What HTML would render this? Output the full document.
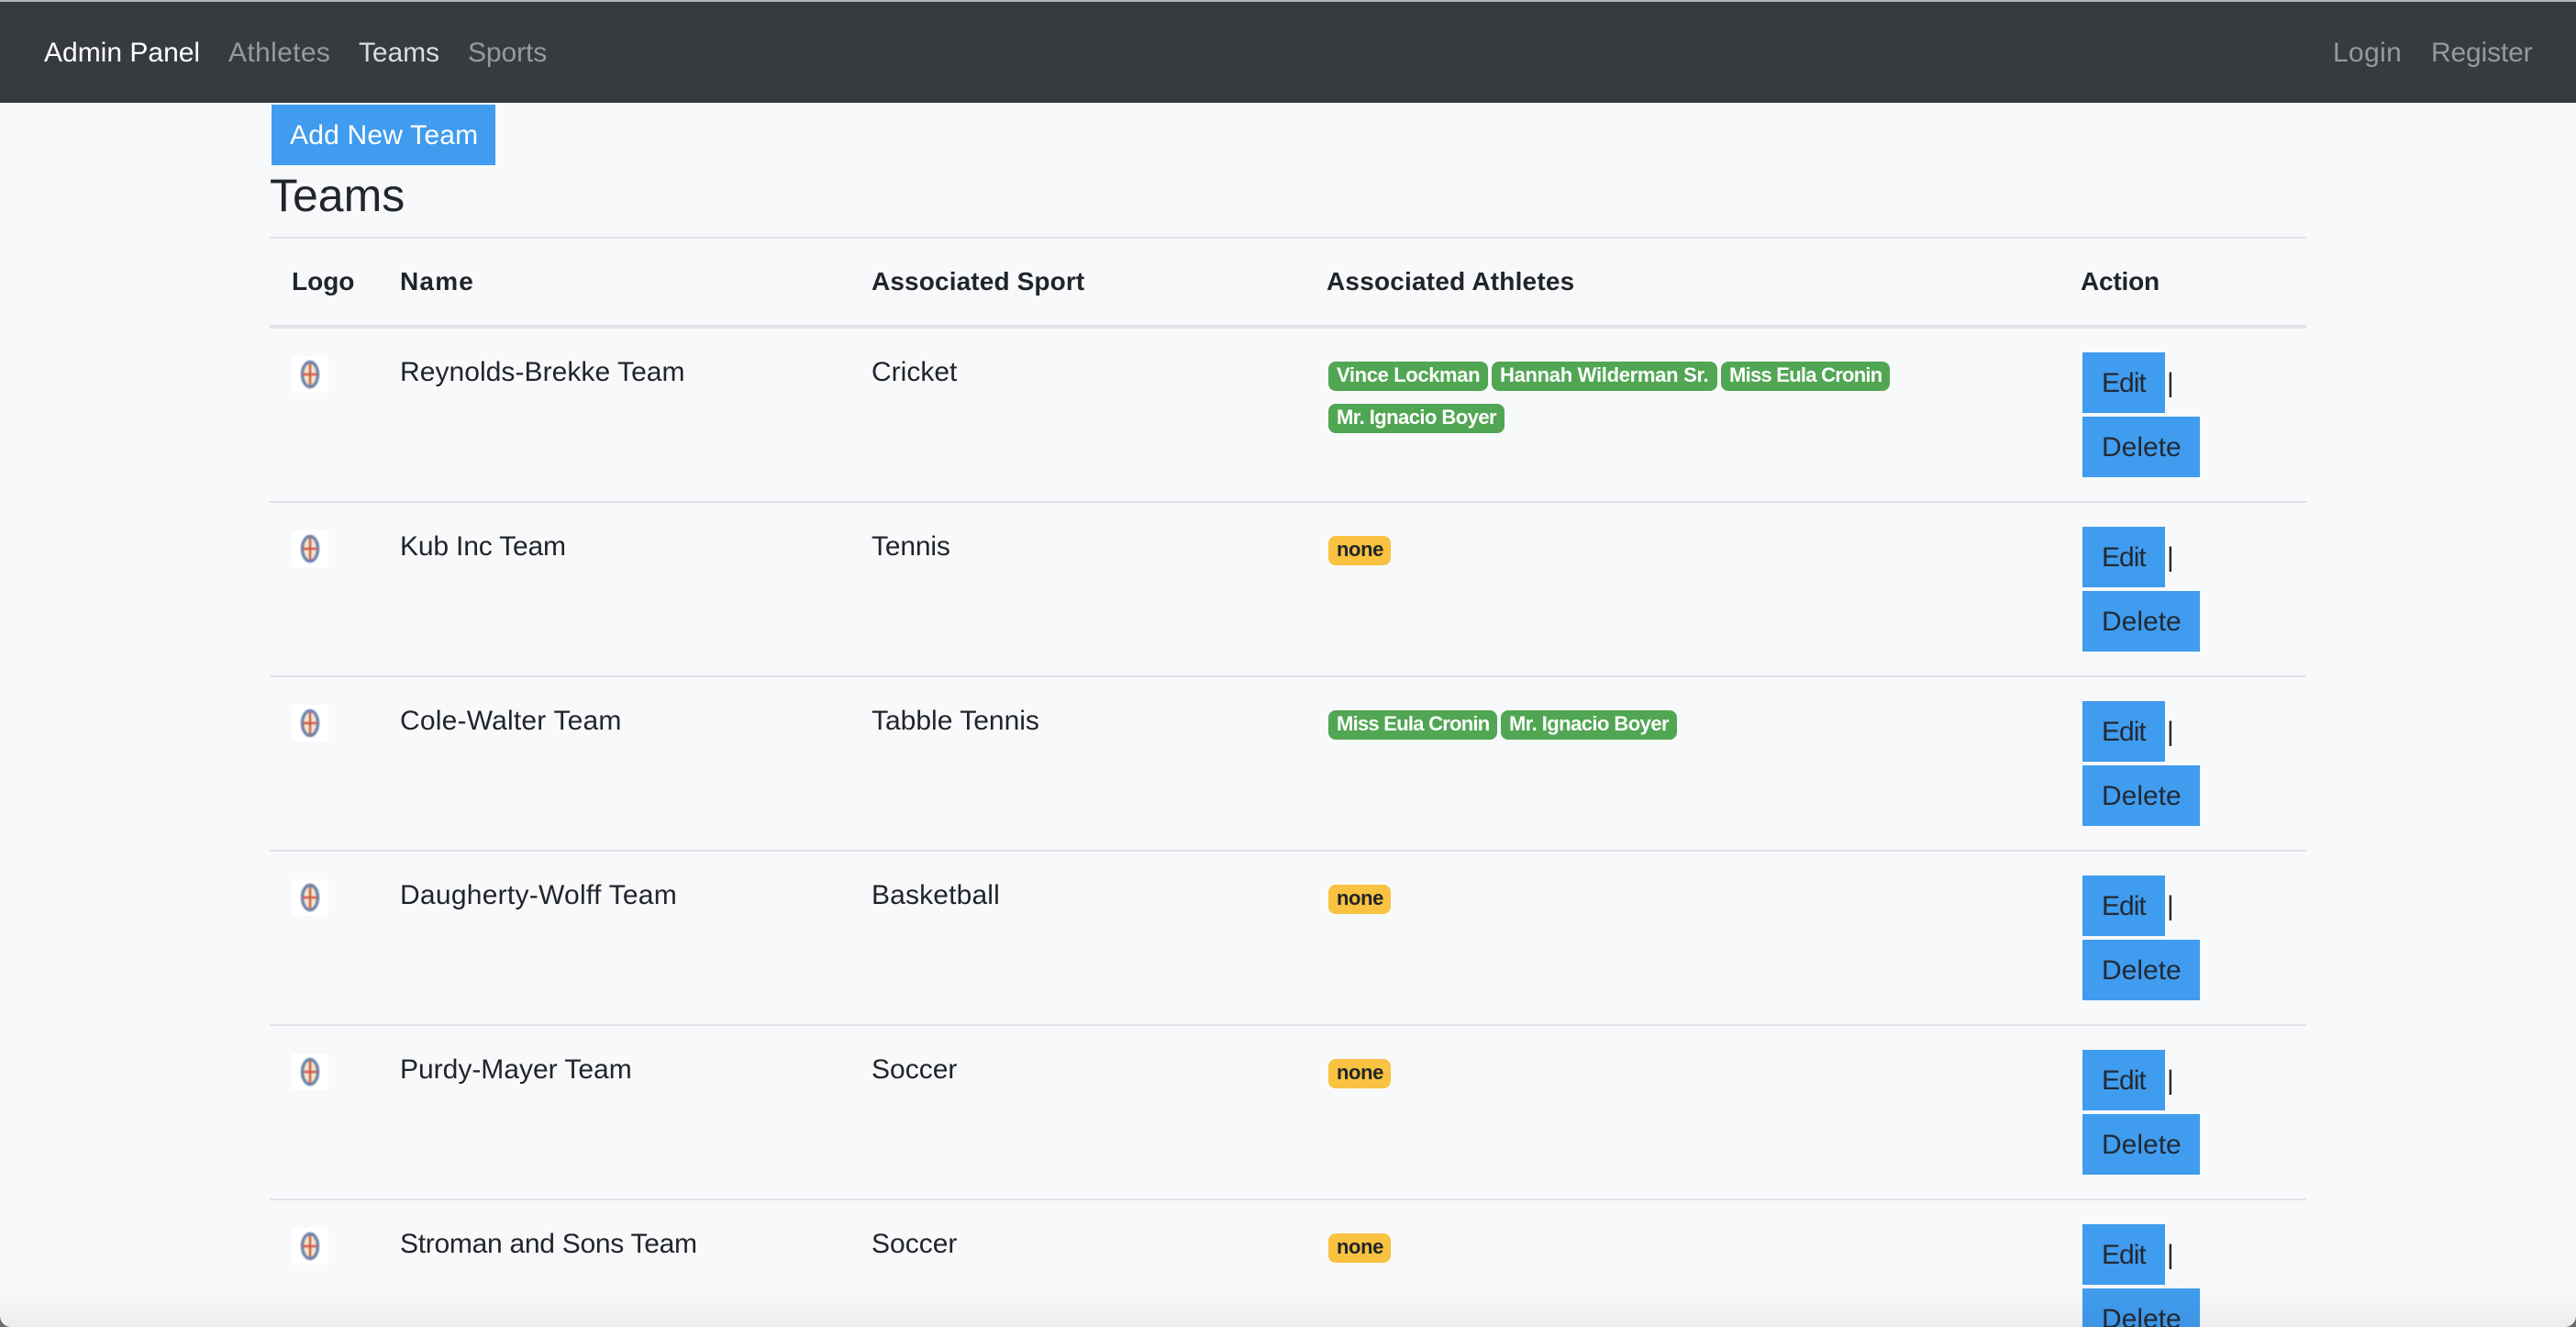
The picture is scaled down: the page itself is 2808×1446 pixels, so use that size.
<!DOCTYPE html>
<html lang="en">
<head>
<meta charset="utf-8">
<title>Teams - Admin Panel</title>
<style>
html,body{margin:0;padding:0;width:2808px;height:1446px;overflow:hidden;background:#f8f9fb}
body{position:relative;font-family:"Liberation Sans",Arial,sans-serif;font-size:30px;color:#212529}
a{text-decoration:none;color:inherit}
.t{position:absolute;white-space:nowrap;line-height:40px;top:0}
nav{position:absolute;left:0;top:0;width:2808px;height:112px;background:#373b3f;border-top:2px solid #b4b5b6;box-sizing:border-box}
nav .t{top:36px;color:#97999b}
nav .w{color:#fff}
nav .a{color:#dcdddd}
.btn{position:absolute;background:#409cee;height:66px;line-height:67px;white-space:nowrap;box-sizing:border-box;color:#212a36}
h1{position:absolute;left:294px;top:183px;margin:0;font-size:50px;font-weight:normal;line-height:60px;letter-spacing:0;color:#22262a}
.hr{position:absolute;left:294px;width:2220px;background:#e1e3e9}
.th{font-weight:bold;font-size:28px}
.row{position:absolute;left:294px;width:2220px;height:190px;box-sizing:border-box;border-bottom:2px solid #e1e3e9}
.logo{position:absolute;left:24px;top:30px;width:40px;height:40px;background:#fff;display:block}
.n{left:142px;top:28px}
.s{left:656px;top:28px}
.bd{position:absolute;height:32px;line-height:29px;border-radius:8px;font-size:22px;font-weight:bold;white-space:nowrap;box-sizing:border-box;padding-left:9px}
.g{background:#51a653;color:#fff}
.y{background:#f9c240;color:#212529}
.e{left:1976px;top:26px;width:90px;padding-left:21px}
.d{left:1976px;top:96px;width:128px;padding-left:21px}
.p{left:2068px;top:40px;color:#252535}
#shade{position:absolute;left:0;top:1386px;width:2808px;height:60px;background:linear-gradient(to bottom,rgba(0,0,0,0),rgba(0,0,0,.012) 50%,rgba(0,0,0,.05));pointer-events:none}
#corners{position:absolute;left:0;top:0;pointer-events:none}
.lg{filter:blur(.7px)}
</style>
</head>
<body>
<nav>
  <a class="t w" style="left:48px">Admin Panel</a>
  <a class="t" style="left:249px;letter-spacing:.35px">Athletes</a>
  <a class="t a" style="left:391px;letter-spacing:-.1px">Teams</a>
  <a class="t" style="left:510px;letter-spacing:-.1px">Sports</a>
  <a class="t" style="left:2543px;letter-spacing:.35px">Login</a>
  <a class="t" style="left:2650px;letter-spacing:-.15px">Register</a>
</nav>

<a class="btn" style="left:296px;top:114px;width:244px;padding-left:20px;line-height:68px;color:#fff;letter-spacing:.2px">Add New Team</a>
<h1>Teams</h1>

<div class="hr" style="top:258px;height:2px"></div>
<div class="t th" style="left:318px;top:287px">Logo</div>
<div class="t th" style="left:436px;top:287px;letter-spacing:1.2px">Name</div>
<div class="t th" style="left:950px;top:287px;letter-spacing:.13px">Associated Sport</div>
<div class="t th" style="left:1446px;top:287px;letter-spacing:.2px">Associated Athletes</div>
<div class="t th" style="left:2268px;top:287px;letter-spacing:-.2px">Action</div>
<div class="hr" style="top:354px;height:4px"></div>

<div class="row" style="top:358px">
  <svg class="logo" viewBox="0 0 40 40"><g class="lg"><ellipse cx="20" cy="20" rx="8.5" ry="13.5" fill="#f3e6cc" stroke="#6c84ae" stroke-width="3.4"/><path d="M20 8v24M12 20h16" stroke="#cf5a4a" stroke-width="2.4"/></g></svg>
  <div class="t n" style="letter-spacing:.05px">Reynolds-Brekke Team</div>
  <div class="t s">Cricket</div>
  <span class="bd g" style="left:1154px;top:36px;width:174px;letter-spacing:-.37px">Vince Lockman</span>
  <span class="bd g" style="left:1332px;top:36px;width:246px;letter-spacing:-.3px">Hannah Wilderman Sr.</span>
  <span class="bd g" style="left:1582px;top:36px;width:184px;letter-spacing:-.75px">Miss Eula Cronin</span>
  <span class="bd g" style="left:1154px;top:82px;width:192px;letter-spacing:-.55px">Mr. Ignacio Boyer</span>
  <a class="btn e" style="letter-spacing:-1px">Edit</a><span class="t p">|</span>
  <a class="btn d">Delete</a>
</div>

<div class="row" style="top:548px">
  <svg class="logo" viewBox="0 0 40 40"><g class="lg"><ellipse cx="20" cy="20" rx="8.5" ry="13.5" fill="#f3e6cc" stroke="#6c84ae" stroke-width="3.4"/><path d="M20 8v24M12 20h16" stroke="#cf5a4a" stroke-width="2.4"/></g></svg>
  <div class="t n" style="letter-spacing:-.17px">Kub Inc Team</div>
  <div class="t s" style="letter-spacing:-.16px">Tennis</div>
  <span class="bd y" style="left:1154px;top:36px;width:68px;letter-spacing:-.4px">none</span>
  <a class="btn e" style="letter-spacing:-1px">Edit</a><span class="t p">|</span>
  <a class="btn d">Delete</a>
</div>

<div class="row" style="top:738px">
  <svg class="logo" viewBox="0 0 40 40"><g class="lg"><ellipse cx="20" cy="20" rx="8.5" ry="13.5" fill="#f3e6cc" stroke="#6c84ae" stroke-width="3.4"/><path d="M20 8v24M12 20h16" stroke="#cf5a4a" stroke-width="2.4"/></g></svg>
  <div class="t n" style="letter-spacing:.2px">Cole-Walter Team</div>
  <div class="t s" style="letter-spacing:0">Tabble Tennis</div>
  <span class="bd g" style="left:1154px;top:36px;width:184px;letter-spacing:-.75px">Miss Eula Cronin</span>
  <span class="bd g" style="left:1342px;top:36px;width:192px;letter-spacing:-.55px">Mr. Ignacio Boyer</span>
  <a class="btn e" style="letter-spacing:-1px">Edit</a><span class="t p">|</span>
  <a class="btn d">Delete</a>
</div>

<div class="row" style="top:928px">
  <svg class="logo" viewBox="0 0 40 40"><g class="lg"><ellipse cx="20" cy="20" rx="8.5" ry="13.5" fill="#f3e6cc" stroke="#6c84ae" stroke-width="3.4"/><path d="M20 8v24M12 20h16" stroke="#cf5a4a" stroke-width="2.4"/></g></svg>
  <div class="t n" style="letter-spacing:.26px">Daugherty-Wolff Team</div>
  <div class="t s" style="letter-spacing:.15px">Basketball</div>
  <span class="bd y" style="left:1154px;top:36px;width:68px;letter-spacing:-.4px">none</span>
  <a class="btn e" style="letter-spacing:-1px">Edit</a><span class="t p">|</span>
  <a class="btn d">Delete</a>
</div>

<div class="row" style="top:1118px">
  <svg class="logo" viewBox="0 0 40 40"><g class="lg"><ellipse cx="20" cy="20" rx="8.5" ry="13.5" fill="#f3e6cc" stroke="#6c84ae" stroke-width="3.4"/><path d="M20 8v24M12 20h16" stroke="#cf5a4a" stroke-width="2.4"/></g></svg>
  <div class="t n" style="letter-spacing:-.01px">Purdy-Mayer Team</div>
  <div class="t s">Soccer</div>
  <span class="bd y" style="left:1154px;top:36px;width:68px;letter-spacing:-.4px">none</span>
  <a class="btn e" style="letter-spacing:-1px">Edit</a><span class="t p">|</span>
  <a class="btn d">Delete</a>
</div>

<div class="row" style="top:1308px;border-bottom:0">
  <svg class="logo" viewBox="0 0 40 40"><g class="lg"><ellipse cx="20" cy="20" rx="8.5" ry="13.5" fill="#f3e6cc" stroke="#6c84ae" stroke-width="3.4"/><path d="M20 8v24M12 20h16" stroke="#cf5a4a" stroke-width="2.4"/></g></svg>
  <div class="t n" style="letter-spacing:-.28px">Stroman and Sons Team</div>
  <div class="t s">Soccer</div>
  <span class="bd y" style="left:1154px;top:36px;width:68px;letter-spacing:-.4px">none</span>
  <a class="btn e" style="letter-spacing:-1px">Edit</a><span class="t p">|</span>
  <a class="btn d">Delete</a>
</div>

<div id="shade"></div>
<svg id="corners" width="2808" height="1446" viewBox="0 0 2808 1446"><path d="M0 1434A12 12 0 0 0 12 1446H0ZM2808 1434A12 12 0 0 1 2796 1446H2808Z" fill="#6a6b6d"/></svg>
</body>
</html>
